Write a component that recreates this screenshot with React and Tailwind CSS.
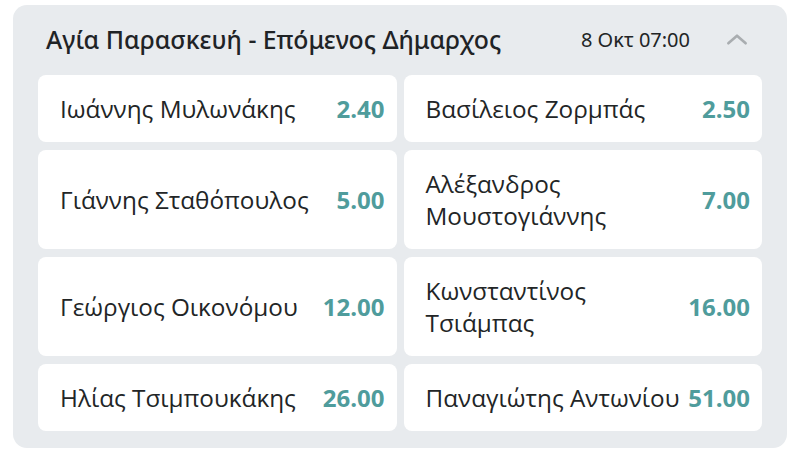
const odds = [
  [
    { name: "Ιωάννης Μυλωνάκης", price: "2.40" },
    { name: "Βασίλειος Ζορμπάς", price: "2.50" },
  ],
  [
    { name: "Γιάννης Σταθόπουλος", price: "5.00" },
    { name: "Αλέξανδρος Μουστογιάννης", price: "7.00" },
  ],
  [
    { name: "Γεώργιος Οικονόμου", price: "12.00" },
    { name: "Κωνσταντίνος Τσιάμπας", price: "16.00" },
  ],
  [
    { name: "Ηλίας Τσιμπουκάκης", price: "26.00" },
    { name: "Παναγιώτης Αντωνίου", price: "51.00" },
  ],
];

function OddsCell({ name, price }) {
  return (
    <button className="flex items-center justify-between gap-[4px] rounded-lg bg-white pl-[22px] pr-[12px] py-[17.5px] text-left">
      <span className="text-[24.3px] leading-[32px] text-[#222526]">{name}</span>
      <span className="shrink-0 text-[24px] font-bold leading-[32px] text-[#4f9c9c]">{price}</span>
    </button>
  );
}

export default function App() {
  return (
    <div className="min-h-screen bg-white pt-[5px] pl-[13px] pr-[13px]" style={{ fontFamily: '"Open Sans", sans-serif' }}>
      <div className="rounded-[14px] bg-[#e8ebee] px-[25px] pb-[17px]">
        <div className="flex h-[70px] items-center">
          <h2 className="ml-[8px] flex-1 text-[24.8px] font-medium text-[#1f2326]" style={{ fontFamily: '"Noto Sans", sans-serif' }}>
            Αγία Παρασκευή - Επόμενος Δήμαρχος
          </h2>
          <span className="text-[20px] text-[#222526]" style={{ fontFamily: '"Noto Sans", sans-serif' }}>8 Οκτ 07:00</span>
          <svg viewBox="0 0 24 24" className="ml-[34px] mr-[12px] h-[26px] w-[26px] text-[#a9adb0]" fill="none" stroke="currentColor" strokeWidth="2.4" strokeLinecap="round" strokeLinejoin="round">
            <path d="M4 15l8-7 8 7" />
          </svg>
        </div>
        <div className="grid grid-cols-2 gap-x-[7px] gap-y-[8px]">
          {odds.flat().map((o) => (
            <OddsCell key={o.name} {...o} />
          ))}
        </div>
      </div>
    </div>
  );
}
